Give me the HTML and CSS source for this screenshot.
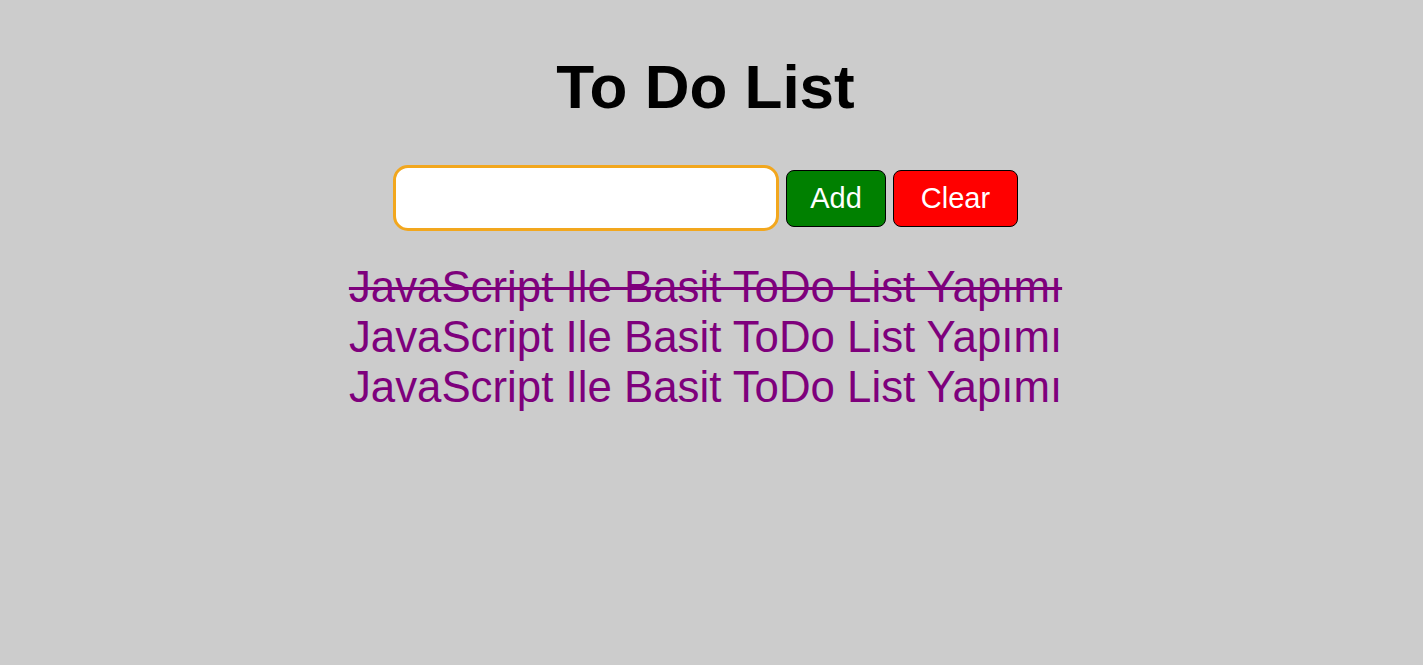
FILE: index.html
```html
<!DOCTYPE html>
<html lang="tr">
<head>
<meta charset="utf-8">
<title>To Do List</title>
<link rel="stylesheet" href="styles.css">
</head>
<body>
<main class="app">
  <h1 class="title">To Do List</h1>
  <div class="form-row">
    <input class="task-input" type="text">
    <button class="btn btn-add">Add</button>
    <button class="btn btn-clear">Clear</button>
  </div>
  <ul class="todo-list">
    <li class="todo-item done">JavaScript Ile Basit ToDo List Yapımı</li>
    <li class="todo-item">JavaScript Ile Basit ToDo List Yapımı</li>
    <li class="todo-item">JavaScript Ile Basit ToDo List Yapımı</li>
  </ul>
</main>
</body>
</html>
```

FILE: styles.css
```css
html, body {
  margin: 0;
  padding: 0;
  background: #cccccc;
  font-family: "Liberation Sans", Arial, sans-serif;
}

.app {
  display: flex;
  flex-direction: column;
  align-items: center;
  padding: 52px 12px 0 0;
}

.title {
  margin: 0;
  font-size: 62px;
  font-weight: bold;
  color: #000;
  line-height: 70px;
}

.form-row {
  display: flex;
  align-items: center;
  gap: 7px;
  margin-top: 43px;
}

.task-input {
  box-sizing: border-box;
  width: 386px;
  height: 66px;
  border: 3px solid #f2a71e;
  border-radius: 15px;
  background: #fff;
  outline: none;
  font-size: 24px;
  padding: 0 12px;
}

.btn {
  box-sizing: border-box;
  height: 57px;
  border: 1px solid #000;
  border-radius: 8px;
  color: #fff;
  font-family: "Liberation Sans", Arial, sans-serif;
  font-size: 29px;
  padding: 0;
}

.btn-add {
  width: 100px;
  background: #008000;
}

.btn-clear {
  width: 125px;
  background: #ff0000;
}

.todo-list {
  list-style: none;
  margin: 31px 0 0;
  padding: 0;
  text-align: center;
}

.todo-item {
  color: #7e007c;
  font-size: 43.8px;
  line-height: 50px;
}

.todo-item.done {
  text-decoration: line-through;
  text-decoration-thickness: 3px;
}
```
